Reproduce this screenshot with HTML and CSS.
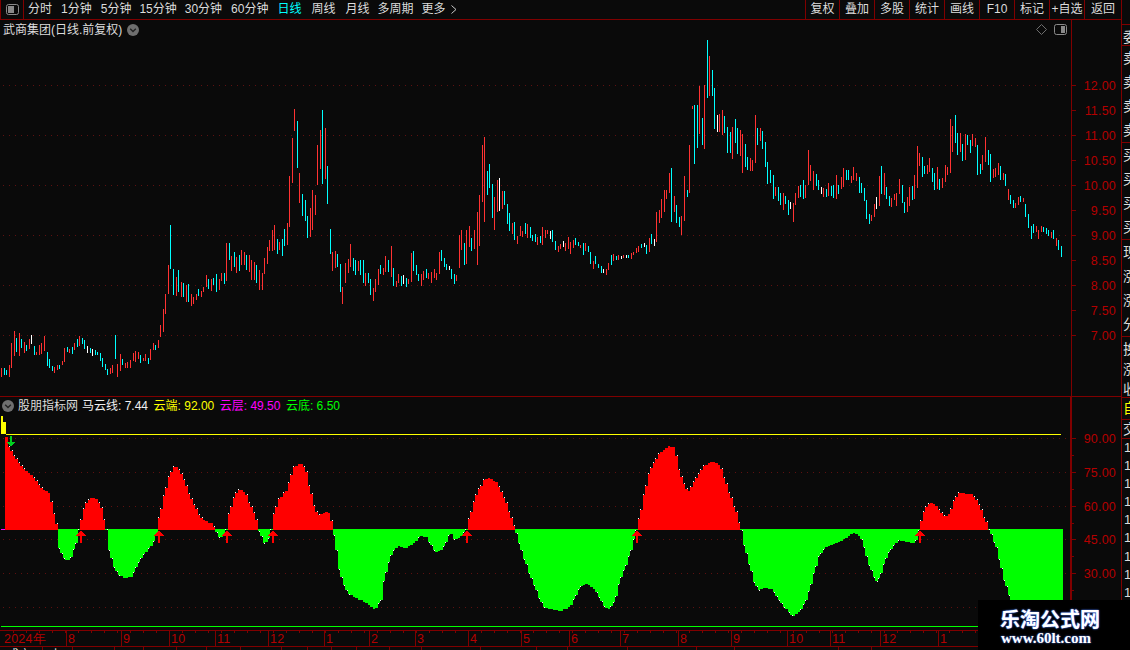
FILE: index.html
```html
<!DOCTYPE html>
<html lang="zh">
<head>
<meta charset="utf-8">
<title>武商集团</title>
<link rel="stylesheet" href="styles.css">
</head>
<body>
<div class="app">
  <div class="left">
    <header class="toolbar">
      <div class="tool-toggle">
        <svg class="toggle-icon" viewBox="0 0 13 11"><rect x="0.5" y="0.5" width="12" height="10" rx="2" fill="none" stroke="#8a8a8a"/><rect x="2" y="2" width="6" height="7" fill="#8a8a8a"/></svg>
      </div>
      <nav class="periods">
        <span>分时</span><span>1分钟</span><span>5分钟</span><span class="tight">15分钟</span><span class="tight">30分钟</span><span>60分钟</span><span class="active">日线</span><span class="loose">周线</span><span class="loose">月线</span><span class="tight">多周期</span><span class="tight more">更多<svg class="chev" viewBox="0 0 6 9"><path d="M.5.5 5 4.5.5 8.5" fill="none" stroke="#c8c8c8"/></svg></span>
      </nav>
      <div class="actions">
        <span>复权</span><span>叠加</span><span>多股</span><span>统计</span><span>画线</span><span>F10</span><span>标记</span><span>+自选</span><span>返回</span>
      </div>
    </header>

    <section class="panel price">
      <div class="plot">
        <svg id="price-plot" class="chart" viewBox="0 20 1071 376"></svg>
        <div class="legend">
          <span>武商集团(日线.前复权)</span>
          <svg class="drop" viewBox="0 0 12 12"><circle cx="6" cy="6" r="6" fill="#6f6f6f"/><path d="M3.2 4.8 6 7.6 8.8 4.8" fill="none" stroke="#222" stroke-width="1.4"/></svg>
        </div>
        <div class="plot-tools">
          <svg class="diamond" viewBox="0 0 11 11"><path d="M5.5.5 10.5 5.5 5.5 10.5.5 5.5Z" fill="none" stroke="#6e6e6e"/></svg>
          <svg class="toggle-icon" viewBox="0 0 13 11"><rect x="0.5" y="0.5" width="12" height="10" rx="2" fill="none" stroke="#8a8a8a"/><rect x="7" y="2" width="4" height="7" fill="#8a8a8a"/></svg>
        </div>
      </div>
      <svg id="price-axis" class="axis" viewBox="1071 20 50 376"></svg>
    </section>

    <section class="panel indicator">
      <div class="plot">
        <svg id="ind-plot" class="chart" viewBox="0 397 1070 233"></svg>
        <div class="legend legend-ind">
          <svg class="drop" viewBox="0 0 12 12"><circle cx="6" cy="6" r="6" fill="#6f6f6f"/><path d="M3.2 4.8 6 7.6 8.8 4.8" fill="none" stroke="#222" stroke-width="1.4"/></svg>
          <span class="name">股朋指标网</span>
          <span class="white">马云线: 7.44</span>
          <span class="yellow">云端: 92.00</span>
          <span class="magenta">云层: 49.50</span>
          <span class="green">云底: 6.50</span>
        </div>
      </div>
      <svg id="ind-axis" class="axis thick" viewBox="1070 397 51 233"></svg>
    </section>

    <svg id="time-axis" class="timeline" viewBox="0 630 1121 16"></svg>

    <footer class="status">
      <span>成交量</span><span>上</span><span></span><span></span><span></span><span></span><span></span><span></span><span></span><span></span><span></span><span></span><span></span><span></span><span></span><span></span><span></span><span></span><span></span><span class="cyan">12.35</span><span></span><span></span>
    </footer>
  </div>

  <aside class="side">
    <div class="cell c-top"></div>
    <div class="cell c-one"><span>委</span></div>
    <div class="cell c-four"><span>卖</span><span>卖</span><span>卖</span><span>卖</span></div>
    <div class="cell c-four"><span>买</span><span>买</span><span>买</span><span>买</span></div>
    <div class="cell c-four"><span>现</span><span>涨</span><span>涨</span><span>分</span></div>
    <div class="cell c-rest"><span>换</span><span>涨</span><span>收</span></div>
    <div class="cell c-fav"><span>自</span></div>
    <div class="cell c-deal"><span>交</span></div>
    <div class="cell c-nums"><span>1</span><span>1</span><span>1</span><span>1</span><span>1</span><span>1</span><span>1</span><span>1</span><span>1</span><span>1</span><span>1</span></div>
  </aside>

  <div class="watermark">
    <div class="wm-title">乐淘公式网</div>
    <div class="wm-url">www.60lt.com</div>
  </div>
</div>
<script src="chart.js"></script>
</body>
</html>
```
FILE: styles.css
```css
* { box-sizing: border-box; }
html, body { margin: 0; padding: 0; background: #0a0a0a; }
body { font-family: "Liberation Sans", "Noto Sans CJK SC", sans-serif; font-size: 12px; color: #dcdcdc; }
.app { position: relative; display: flex; width: 1130px; height: 650px; overflow: hidden; background: #0a0a0a; }
.left { width: 1121px; flex: none; display: flex; flex-direction: column; }

.toolbar { display: flex; height: 20px; border-bottom: 1px solid #800000; flex: none; }
.tool-toggle { width: 24px; display: flex; align-items: center; justify-content: center; border-left: 1px solid #800000; border-right: 1px solid #800000; }
.toggle-icon { width: 13px; height: 11px; display: block; }
.periods { display: flex; gap: 9px; padding-left: 4px; line-height: 19px; white-space: nowrap; }
.periods .active { color: #00ffff; }
.periods .tight { margin-left: -1px; }
.periods .loose { margin-left: 1px; }
.more { display: flex; align-items: center; gap: 5px; }
.chev { width: 6px; height: 9px; display: block; }
.actions { margin-left: auto; display: flex; line-height: 19px; }
.actions span { width: 35px; text-align: center; border-left: 1px solid #800000; white-space: nowrap; }
.actions span:first-child { width: 34px; }
.actions span:last-child { width: 37px; }

.panel { display: flex; flex: none; }
.price { height: 377px; border-bottom: 1px solid #800000; }
.indicator { height: 233px; }
.plot { position: relative; width: 1071px; flex: none; }
.chart { display: block; width: 100%; height: 100%; }
.axis { display: block; width: 50px; flex: none; height: 100%; }
.indicator .plot { width: 1070px; }
.axis.thick { width: 51px; }

.legend { position: absolute; left: 3px; top: 0; height: 19px; display: flex; align-items: center; gap: 5px; white-space: nowrap; line-height: 18px; }
.legend-ind { left: 2px; top: 1px; height: 16px; }
.legend-ind .name { margin-left: -1px; margin-right: -1px; }
.legend-ind .white, .legend-ind .yellow, .legend-ind .magenta { margin-right: 0.5px; }
.drop { width: 12px; height: 12px; flex: none; display: block; }
.white { color: #f0f0f0; }
.yellow { color: #ffff00; }
.magenta { color: #ff00ff; }
.green { color: #00ff00; }
.plot-tools { position: absolute; right: 4px; top: 4px; display: flex; align-items: center; gap: 7px; }
.diamond { width: 11px; height: 11px; display: block; }

.timeline { display: block; width: 1121px; height: 16px; flex: none; }

.status { flex: none; height: 4px; overflow: hidden; border-top: 1px solid #800000; display: grid; grid-template-columns: 43px 30px 42px 29px 33px 30px 34px 41px 26px 24px 25px 33px 32px 59px 56px 31px 60px 69px 38px 104px 33px 1fr; line-height: 16px; color: #e8e8e8; }
.status span { border-right: 1px solid #800000; padding-left: 7px; height: 16px; }
.status .cyan { color: #00ffff; padding-left: 5px; }

.side { width: 9px; flex: none; border-left: 1px solid #800000; display: flex; flex-direction: column; overflow: hidden; font-size: 14px; color: #dcdcdc; }
.cell { flex: none; overflow: hidden; border-bottom: 1px solid #800000; padding-left: 1px; display: flex; flex-direction: column; width: 8px; }
.cell span { display: block; width: 7px; overflow: hidden; white-space: nowrap; line-height: 24.25px; }
.c-top { height: 25px; }
.c-one { height: 21px; }
.c-four { height: 97px; }
.c-rest { height: 61px; }
.c-fav { height: 22px; color: #ffff00; }
.c-fav span { line-height: 21px; }
.c-deal { height: 19px; }
.c-deal span { line-height: 18px; }
.c-nums { border-bottom: 0; padding-left: 2px; flex: 1; }
.c-nums span { line-height: 18.1px; font-size: 13px; }

.watermark { position: absolute; left: 978px; top: 600px; width: 152px; height: 50px; background: #000; color: #fff; text-align: center; font-weight: 700; }
.wm-title { font-family: "Noto Sans CJK SC", sans-serif; font-size: 20px; line-height: 24px; padding-top: 7px; padding-right: 8px; text-shadow: 0 0 2px #4a7fff, 0 0 1px #4a7fff; }
.wm-url { font-family: "Liberation Serif", serif; font-size: 15px; line-height: 15px; padding-right: 16px; text-shadow: 0 0 2px #4a7fff; }

.tick { stroke: #800000; fill: none; shape-rendering: crispEdges; }
.dots { stroke: #5e1010; fill: none; stroke-dasharray: 1 5; shape-rendering: crispEdges; }
.lbl { fill: #b40000; font-size: 12.5px; font-family: "Liberation Sans", sans-serif; letter-spacing: 0.2px; }
.bars { fill: none; shape-rendering: crispEdges; }
.solid { shape-rendering: crispEdges; }
```
FILE: chart.js
```js
var NS = "http://www.w3.org/2000/svg";
function el(parent, tag, attrs, text) {
  var n = document.createElementNS(NS, tag);
  for (var k in attrs) n.setAttribute(k, attrs[k]);
  if (text !== undefined) n.textContent = text;
  parent.appendChild(n);
  return n;
}

/* candle bodies: [x0, y0, "z,top,bottom,colour ..."] in 3x crop coordinates */
var sections = [
[0,240,"4,384,411,r 13,384,405,c 19,390,405,c 28,375,411,r 34,309,384,r 43,273,348,r 49,294,336,c 58,279,348,r 64,297,324,c 73,306,339,r 79,315,333,c 88,297,327,r 94,285,312,w 103,318,345,c 109,336,345,r 118,315,345,r 124,309,342,r 133,288,333,r 142,336,378,c 148,357,384,c 157,378,393,c 163,381,399,r 172,375,390,r 178,375,387,c 187,363,375,r 193,324,366,r 202,321,336,c 208,327,339,r 217,321,342,c 223,309,330,r 232,297,321,c 238,288,318,r 247,294,312,c 253,300,327,c 262,318,339,w 271,324,339,c 277,327,348,w 286,330,345,c 292,336,345,c 301,339,363,c 307,354,381,c 316,372,390,c 322,387,405,c 331,384,402,r 337,375,399,r 346,285,357,c 352,372,411,r 361,342,393,r 367,357,375,c 376,369,384,r 382,366,384,r 391,360,384,r 400,339,363,r 406,333,366,r 415,336,357,r 421,345,369,c 430,354,363,r 436,342,363,r 445,354,372,c 451,327,360,r 460,309,330,r 466,315,330,c 475,300,324,r 481,255,291,r 490,207,276,r 496,162,222,r 505,75,162,r 511,-45,87,c 520,87,165,c 529,111,168,r 535,90,156,c 544,126,171,r 550,129,171,c 559,135,186,r 565,132,186,c 574,162,198,r 580,171,192,r 589,162,180,r 595,147,168,c 604,153,171,r 610,141,156,r 619,105,141,r 625,117,147,c 634,117,153,r 640,114,135,c 649,102,156,c 658,117,150,r 664,99,123,r 673,99,132,c 679,9,123,r 688,9,60,c 694,48,93,r 703,36,81,c 709,51,99,r 718,45,93,c"],
[240,240,"4,30,75,r 13,36,75,r 19,45,90,c 28,45,96,r 34,60,120,r 43,66,120,r 49,75,130,c 58,90,150,r"],
[260,100,"7,519,570,r 13,474,522,r 22,441,492,r 28,420,453,r 37,390,453,r 43,375,450,r 52,417,462,c 58,426,450,r 67,417,468,c 73,387,438,c 82,369,435,r 88,228,381,r 97,114,249,r 103,27,93,r 112,63,204,c 118,219,309,r 127,282,348,c 136,300,363,c 142,348,414,c 151,324,411,r 157,270,390,r 166,285,345,r 172,135,255,r 181,90,207,r 187,30,252,c 196,84,237,r 202,198,312,c 211,387,462,c 217,456,513,r 226,453,504,r 232,462,501,c 241,492,576,c 247,561,612,r 256,489,549,r 265,477,519,r 271,432,501,r 280,474,513,c 286,480,525,c 295,483,513,r 301,480,525,c 310,480,549,c 316,519,558,r 325,519,549,c 331,537,585,c 340,564,603,r 346,537,576,r 355,507,555,r 361,495,522,c 370,504,525,r 376,468,516,r 385,480,516,c 394,438,531,r 400,504,558,c 409,543,561,r 415,522,549,r 424,528,558,c 430,525,552,w 439,534,561,c 445,537,552,r 454,459,546,r 460,453,513,c 469,495,525,c 475,522,543,c 484,522,558,r 490,513,540,r 499,507,534,c 505,519,537,r 514,516,549,r 523,507,534,r 529,519,540,r 538,456,522,r 544,450,483,c 553,474,501,c 559,492,510,c 568,498,510,w 574,507,537,c 583,522,552,c 589,525,543,r 598,405,504,r 604,390,450,r 613,429,495,c 619,390,492,r 628,378,441,r 634,414,453,c 643,390,447,r 652,336,495,r 658,285,438,r 667,135,306,r 673,111,366,r 682,213,285,c 688,192,264,c 697,252,354,c 703,291,390,r 712,240,336,r 718,234,333,w"],
[490,130,"37,183,237,r 43,183,225,c 52,222,282,c 58,249,303,c 67,279,312,r 73,276,330,c 82,318,342,r 91,288,318,r 97,303,321,r 106,279,312,c 112,282,324,r 121,291,324,c 127,315,333,c 136,312,336,c 142,321,345,r 151,318,339,c 157,291,345,r 166,300,324,r 172,300,312,r 181,303,327,w 187,300,336,c 196,333,360,c 205,348,366,r 211,342,357,r 220,333,351,w 226,339,363,r 235,321,357,r 241,336,372,r 250,330,354,r 256,324,345,c 265,336,348,c 271,345,354,r 280,339,375,c 286,339,363,r 295,348,366,c 301,366,402,c 310,393,417,r 316,378,402,c 325,402,414,c 334,408,429,c 340,417,429,w 349,417,435,r 355,399,420,r 364,375,405,c 370,372,393,r 379,378,390,c 385,375,390,r 394,378,387,w 400,375,384,r 409,375,384,w 415,375,384,c 424,369,387,r 430,366,375,r 439,354,369,r 445,348,366,r 454,342,354,c 463,339,351,w 469,345,372,c 478,324,366,r"],
[640,30,"33,612,642,c 42,627,648,w 48,546,636,r 57,540,579,r 63,507,564,r 72,480,546,r 78,480,507,r 87,429,489,r 93,414,576,c 102,498,546,r 108,525,579,c 117,561,591,c 123,558,615,r 132,438,573,r 141,480,501,c 147,345,489,r 156,228,237,r 162,225,402,c 171,225,354,c 177,168,312,r 186,264,345,c 192,165,357,r 201,30,204,c 207,78,198,r 216,120,198,c 222,174,297,c 231,255,306,w 237,252,306,r 246,240,315,r 252,258,309,c 261,291,369,c 270,306,369,c 276,291,387,r 285,267,339,c 291,294,372,c 300,300,378,r 306,312,429,r 315,342,411,c 321,381,420,c 330,384,423,r 336,390,423,r 345,255,399,r 351,294,345,c 360,294,333,r 366,303,357,c 375,336,411,c 381,396,462,c 390,420,459,c 399,435,507,c 405,471,498,r 414,471,513,c 420,489,525,c 429,489,540,r 435,498,522,c 444,510,555,c 450,516,537,w 459,519,576,r 465,489,525,r 474,468,504,r 480,465,501,c 489,450,507,c 495,465,504,r 504,360,465,r 510,405,453,r 519,423,480,r 528,432,468,c 534,450,480,c 543,471,492,w 549,474,501,r 558,477,501,c 564,459,498,r 573,468,498,c 579,465,504,c 588,435,507,r 594,465,492,c 603,441,477,r 609,414,471,r 618,420,450,c 624,420,450,c 633,438,459,r 639,411,450,r 648,429,453,r 657,441,489,c 663,459,489,c 672,474,513,c 678,510,567,c 687,552,582,c 693,555,573,r 702,522,561,r 708,501,537,w 717,438,528,r"],
[875,105,"19,183,267,c 28,204,270,r 34,246,282,c 43,273,303,c 49,279,306,r 58,267,285,r 64,264,303,r 73,222,267,r 82,240,294,c 88,291,324,c 97,276,321,r 103,246,303,r 112,243,285,c 118,210,282,r 127,123,249,r 133,144,183,r 142,156,216,c 148,183,207,c 157,180,207,r 163,159,201,r 172,189,231,c 178,204,255,c 187,186,252,r 193,222,255,c 202,219,249,r 211,180,231,r 217,186,210,r 226,42,204,r 232,63,141,r 241,30,114,c 247,84,150,c 256,84,141,r 262,117,168,c 271,87,165,r 277,90,120,c 286,105,144,c 292,87,123,r 301,99,126,r 307,120,210,c 316,177,207,c 322,150,195,r 331,96,171,r 340,135,180,c 346,147,231,c 355,192,219,r 361,189,216,r 370,174,210,r 376,183,225,c 385,204,225,r 391,207,243,c 400,252,285,r 406,270,297,c 415,285,309,c 421,294,309,r 430,276,300,r 436,273,291,c 445,279,291,r 451,297,336,c 460,327,369,c 469,363,402,c 475,357,384,c 484,363,381,r 490,375,402,r 499,363,381,r 505,366,381,c 514,369,387,c 520,375,393,c 529,381,399,r 535,375,402,c 544,399,423,r 550,405,435,c 559,423,456,c"]
];

var pricePlot = document.getElementById("price-plot");
var priceAxis = document.getElementById("price-axis");
var indPlot = document.getElementById("ind-plot");
var indAxis = document.getElementById("ind-axis");
var timeAxis = document.getElementById("time-axis");

function dotted(svg, y, x2) {
  el(svg, "path", {"class": "dots", d: "M3 " + (y + 0.5) + "H" + x2});
}

/* price panel */
[85, 135, 185, 235, 285, 335].forEach(function (y) { dotted(pricePlot, y, 1066); });
var paths = {r: "", c: "", w: ""};
sections.forEach(function (s) {
  s[2].split(" ").forEach(function (b) {
    var p = b.split(",");
    var x = Math.floor(s[0] + p[0] / 3) + 0.5;
    var t = Math.round(s[1] + p[1] / 3);
    var e = Math.round(s[1] + p[2] / 3);
    paths[p[3]] += "M" + x + " " + t + "V" + e;
  });
});
var barColours = {r: "#ff3232", c: "#00ffff", w: "#ffffff"};
for (var c in paths) el(pricePlot, "path", {"class": "bars", stroke: barColours[c], d: paths[c]});

function axisLabel(svg, y, text) {
  el(svg, "text", {"class": "lbl", x: 1116, y: y + 4.5, "text-anchor": "end"}, text);
}
el(priceAxis, "path", {"class": "tick", d: "M1071.5 20V396"});
for (var y = 85, v = 12; y <= 335; y += 25, v -= 0.5) {
  el(priceAxis, "path", {"class": "tick", d: "M1071 " + (y + 0.5) + "H1076"});
  axisLabel(priceAxis, y + 0.5, v.toFixed(2));
}

/* indicator panel */
[438, 472, 506, 539, 573, 607].forEach(function (y) { dotted(indPlot, y, 1066); });

var curve = [[5,433],[8,445],[15,458],[23,468],[33,477],[42,489],[49,493],[52,507],[55,518],[57,529],[58,545],[61,553],[65,560],[68,561],[72,555],[76,543],[79,529],[82,515],[86,503],[92,497],[97,499],[102,510],[106,529],[108,545],[109,550],[113,565],[118,575],[125,578],[132,577],[137,565],[143,555],[150,547],[155,540],[157,529],[160,513],[163,500],[168,480],[173,467],[177,467],[183,477],[190,497],[195,507],[200,517],[207,522],[213,524],[215,529],[218,537],[223,537],[226,529],[228,517],[232,503],[236,493],[240,489],[245,493],[250,505],[255,515],[258,529],[260,533],[263,543],[268,542],[271,529],[273,517],[278,500],[287,490],[293,468],[300,463],[305,468],[310,490],[315,510],[318,516],[325,512],[329,513],[333,528],[336,550],[340,575],[347,592],[355,598],[365,602],[375,610],[381,600],[385,575],[392,552],[398,546],[405,548],[412,545],[420,536],[426,537],[435,552],[442,550],[450,533],[455,540],[460,537],[466,529],[470,515],[476,495],[484,480],[490,478],[497,483],[505,500],[510,515],[515,529],[520,547],[528,570],[535,588],[543,607],[550,609],[560,611],[570,607],[580,587],[587,583],[595,590],[602,603],[608,611],[615,600],[620,580],[627,562],[632,547],[636,530],[640,515],[645,490],[650,470],[658,455],[668,446],[674,447],[680,475],[688,493],[695,480],[703,467],[713,461],[720,466],[728,490],[737,515],[741,530],[745,550],[750,567],[753,580],[758,590],[765,588],[772,589],[780,602],[787,610],[793,617],[800,611],[807,598],[813,577],[818,558],[825,547],[833,544],[843,540],[853,533],[858,534],[863,543],[867,560],[872,573],[877,583],[882,570],[887,555],[892,548],[898,540],[907,542],[915,543],[919,530],[922,517],[927,505],[932,502],[937,507],[942,515],[948,517],[953,503],[958,493],[972,494],[978,503],[985,520],[989,529],[997,550],[1003,577],[1010,598],[1016,612],[1063,612]];
function curveAt(x) {
  for (var i = 1; i < curve.length; i++) {
    if (x <= curve[i][0]) {
      var a = curve[i - 1], b = curve[i];
      return a[1] + (b[1] - a[1]) * (x - a[0]) / (b[0] - a[0]);
    }
  }
  return curve[curve.length - 1][1];
}
var BASE = 529, red = "", green = "", white = "", prev = null;
for (var i = 0; ; i++) {
  var x = 5 + Math.round(i * 2.5);
  if (x >= 1063) break;
  var w = 5 + Math.round((i + 1) * 2.5) - x;
  var yv = Math.round(curveAt(x + 1));
  if (yv < BASE) red += "M" + x + " " + yv + "h" + w + "V" + (BASE + 1) + "h-" + w + "Z";
  else green += "M" + x + " " + BASE + "h" + w + "V" + Math.max(yv, BASE + 1) + "h-" + w + "Z";
  if (prev !== null && Math.abs(yv - prev) >= 3) {
    white += "M" + (yv > prev ? x + w - 1 : x) + " " + (yv < BASE ? yv - 1 : yv) + "h1v1h-1Z";
  }
  prev = yv;
}
el(indPlot, "path", {"class": "solid", fill: "#00ff00", d: green});
el(indPlot, "path", {"class": "solid", fill: "#ff0000", d: red});
el(indPlot, "path", {"class": "solid", fill: "#ffffff", d: white});
/* yellow start bars, top line, bottom line */
el(indPlot, "path", {"class": "solid", fill: "#ffff00", d: "M1 416h2v18H1ZM3 422h3v12H3Z"});
el(indPlot, "path", {"class": "solid", fill: "#ffff00", d: "M6 434h1055v1H6Z"});
el(indPlot, "path", {"class": "solid", fill: "#00ff00", d: "M1 626h1062v1H1Z"});
el(indPlot, "path", {"class": "solid", fill: "#ff00ff", d: "M1 529h4v1H1Z"});
/* signal arrows */
[80, 158, 226, 272, 466, 636, 919].forEach(function (x) {
  el(indPlot, "path", {"class": "solid", fill: "#ff0000",
    d: "M" + x + " 531h2l4 5h-4v7h-2v-7h-4Z"});
});
el(indPlot, "path", {"class": "solid", fill: "#00d020", d: "M10 436h2v6h3l-4 5l-4-5h3Z"});

el(indAxis, "path", {"class": "tick", "stroke-width": 2, d: "M1071 397V630"});
var marks = {438: "90.00", 472: "75.00", 506: "60.00", 539: "45.00", 573: "30.00", 607: ""};
Object.keys(marks).forEach(function (k) {
  var yy = +k;
  el(indAxis, "path", {"class": "tick", d: "M1071 " + (yy + 0.5) + "H1076"});
  el(indAxis, "path", {"class": "tick", d: "M1071 " + (yy + 17.5) + "H1074"});
  if (marks[k]) axisLabel(indAxis, yy + 0.5, marks[k]);
});

/* time axis */
el(timeAxis, "path", {"class": "tick", d: "M0 630.5H1121"});
el(timeAxis, "path", {"class": "tick", d: "M1071.5 630V646"});
[[2, "2024年", 0], [66, "8", 1], [121, "9", 1], [169, "10", 1], [215, "11", 1], [268, "12", 1], [324, "1", 1], [369, "2", 1], [415, "3", 1], [468, "4", 1], [521, "5", 1], [569, "6", 1], [620, "7", 1], [678, "8", 1], [731, "9", 1], [787, "10", 1], [830, "11", 1], [880, "12", 1], [938, "1", 1]].forEach(function (m) {
  if (m[2]) el(timeAxis, "path", {"class": "tick", d: "M" + (m[0] + 0.5) + " 630V646"});
  el(timeAxis, "text", {"class": "lbl", x: m[0] + 2, y: 643}, m[1]);
});
var small = "";
for (var tx = 13; tx < 1071; tx += 13) small += "M" + (tx + 0.5) + " 631V633";
el(timeAxis, "path", {"class": "tick", d: small});
```
